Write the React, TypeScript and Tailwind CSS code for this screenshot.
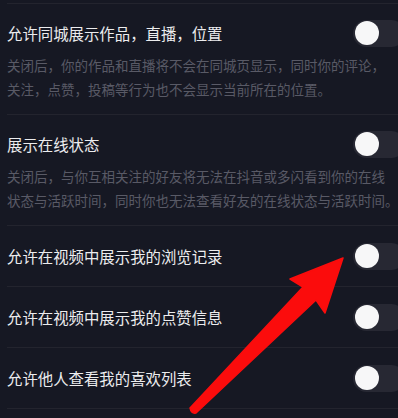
import React from "react";

const font = { fontFamily: '"Noto Sans CJK SC", "Noto Sans", sans-serif' };

function Toggle() {
  return (
    <div className="relative shrink-0 w-[52px] h-[27px] rounded-full bg-[#272833] mr-[-7px]">
      <div className="absolute left-[2px] top-[1.5px] w-[24px] h-[24px] rounded-full bg-[#f7f7f8]" />
    </div>
  );
}

function DescRow({ title, lines }: { title: string; lines: string[] }) {
  return (
    <div className="ml-[7px] border-t border-[#23242e] pt-[17px] pb-[12.75px]">
      <div className="flex items-center justify-between h-[24px]">
        <span className="text-[15.4px] text-[#ececee] leading-[24px]">{title}</span>
        <Toggle />
      </div>
      <div className="mt-[9.25px] text-[13.5px] leading-[23.5px] text-[#595a66] whitespace-nowrap">
        {lines.map((l, i) => (
          <div key={i}>{l}</div>
        ))}
      </div>
    </div>
  );
}

function SimpleRow({ title }: { title: string }) {
  return (
    <div className="ml-[7px] border-t border-[#23242e] h-[61px] flex items-center justify-between">
      <span className="text-[15.4px] text-[#ececee] leading-[24px]">{title}</span>
      <Toggle />
    </div>
  );
}

export default function App() {
  return (
    <div className="relative w-[398px] h-[418px] overflow-hidden bg-[#161823]" style={font}>
      <div className="pt-[3px]">
        <DescRow
          title="允许同城展示作品，直播，位置"
          lines={[
            "关闭后，你的作品和直播将不会在同城页显示，同时你的评论，",
            "关注，点赞，投稿等行为也不会显示当前所在的位置。",
          ]}
        />
        <DescRow
          title="展示在线状态"
          lines={[
            "关闭后，与你互相关注的好友将无法在抖音或多闪看到你的在线",
            "状态与活跃时间，同时你也无法查看好友的在线状态与活跃时间。",
          ]}
        />
        <SimpleRow title="允许在视频中展示我的浏览记录" />
        <SimpleRow title="允许在视频中展示我的点赞信息" />
        <SimpleRow title="允许他人查看我的喜欢列表" />
        <div className="ml-[7px] border-t border-[#23242e] h-[20px]" />
      </div>
      <svg
        className="absolute left-0 top-0 pointer-events-none"
        width="398"
        height="418"
        viewBox="0 0 398 418"
      >
        <path
          d="M343 258 L290 279 L303 287 L190 408 Q191 414 196 413 L316 300 L325 313 Z"
          fill="#fb0c0c"
          stroke="#fb0c0c"
          strokeWidth="1.5"
          strokeLinejoin="round"
        />
      </svg>
    </div>
  );
}
